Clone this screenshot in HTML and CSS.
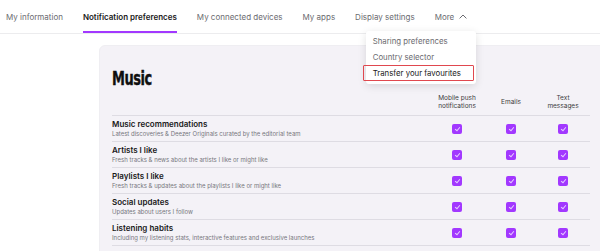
FILE: index.html
```html
<!DOCTYPE html>
<html lang="en">
<head>
  <meta charset="UTF-8" />
  <title>Notification preferences</title>
  <link rel="stylesheet" href="styles.css">
</head>
<body>
  <nav class="tabs">
    <a class="tab">My information</a>
    <a class="tab active">Notification preferences</a>
    <a class="tab">My connected devices</a>
    <a class="tab">My apps</a>
    <a class="tab">Display settings</a>
    <div class="tab more">
      More
      <svg class="chevron" width="8" height="5" viewBox="0 0 8 5"><path d="M0.6 4.4 L4 1 L7.4 4.4" fill="none" stroke="#6b6b70" stroke-width="1"/></svg>
      <ul class="menu">
        <li>Sharing preferences</li>
        <li>Country selector</li>
        <li class="selected">Transfer your favourites</li>
      </ul>
    </div>
  </nav>

  <main class="content">
    <section class="card">
      <h1 class="card-title">Music</h1>
      <div class="grid head">
        <div></div>
        <div class="col-label">Mobile push<br>notifications</div>
        <div class="col-label">Emails</div>
        <div class="col-label">Text<br>messages</div>
      </div>

      <div class="grid row">
        <div>
          <div class="row-title">Music recommendations</div>
          <div class="row-desc">Latest discoveries &amp; Deezer Originals curated by the editorial team</div>
        </div>
        <span class="check"></span><span class="check"></span><span class="check"></span>
      </div>
      <div class="grid row">
        <div>
          <div class="row-title">Artists I like</div>
          <div class="row-desc">Fresh tracks &amp; news about the artists I like or might like</div>
        </div>
        <span class="check"></span><span class="check"></span><span class="check"></span>
      </div>
      <div class="grid row">
        <div>
          <div class="row-title">Playlists I like</div>
          <div class="row-desc">Fresh tracks &amp; updates about the playlists I like or might like</div>
        </div>
        <span class="check"></span><span class="check"></span><span class="check"></span>
      </div>
      <div class="grid row">
        <div>
          <div class="row-title">Social updates</div>
          <div class="row-desc">Updates about users I follow</div>
        </div>
        <span class="check"></span><span class="check"></span><span class="check"></span>
      </div>
      <div class="grid row">
        <div>
          <div class="row-title">Listening habits</div>
          <div class="row-desc">Including my listening stats, interactive features and exclusive launches</div>
        </div>
        <span class="check"></span><span class="check"></span><span class="check"></span>
      </div>
    </section>
  </main>
</body>
</html>
```

FILE: styles.css
```css
body {
  margin: 0;
  font-family: Inter, "Noto Sans", sans-serif;
  background: #ffffff;
  color: #191919;
  overflow: hidden;
  height: 251px;
}
.tabs {
  display: flex;
  align-items: stretch;
  gap: 20px;
  height: 33px;
  padding-left: 6px;
  border-bottom: 1px solid #ececee;
}
.tab {
  display: flex;
  align-items: center;
  font-size: 8px;
  color: #6b6b70;
  border-bottom: 2px solid transparent;
  padding-top: 2px;
  white-space: nowrap;
}
.tab.active {
  color: #191919;
  font-weight: 600;
  border-bottom-color: #a238ff;
}
.more {
  position: relative;
  gap: 5px;
}
.menu {
  position: absolute;
  top: 31px;
  left: -69px;
  width: 110px;
  margin: 0;
  padding: 2px 0 3px;
  list-style: none;
  background: #ffffff;
  border-radius: 3px;
  box-shadow: 0 2px 8px rgba(0, 0, 0, 0.12);
  z-index: 2;
}
.menu li {
  font-size: 7.8px;
  line-height: 16px;
  padding-left: 7px;
  color: #6b6b70;
}
.menu li.selected {
  color: #191919;
  margin: 0 2px 0 -3px;
  padding-left: 9px;
  border: 1px solid #e0484f;
  border-radius: 1px;
  line-height: 14px;
}
.content {
  padding: 11px 0 0 99px;
}
.card {
  width: 520px;
  height: 260px;
  background: #f4f2f7;
  border: 1px solid #efeef2;
  border-radius: 6px 0 0 0;
  padding: 22px 0 0 12px;
}
.card-title {
  margin: 0;
  font-family: "DejaVu Sans", sans-serif;
  font-stretch: condensed;
  font-weight: 700;
  font-size: 20px;
  line-height: 20px;
  letter-spacing: -0.6px;
  color: #0f0f0f;
  -webkit-text-stroke: 0.4px #0f0f0f;
  transform: scaleX(0.72);
  transform-origin: left center;
}
.grid {
  display: grid;
  grid-template-columns: 1fr 58px 50px 54px;
  align-items: center;
  width: 478px;
  border-bottom: 1px solid #dedce3;
}
.head {
  margin-top: 6px;
  padding-bottom: 5px;
}
.col-label {
  text-align: center;
  font-size: 6.5px;
  line-height: 8px;
  color: #3c3c40;
}
.row {
  padding: 3px 0 3px;
}
.row-title {
  font-size: 8px;
  line-height: 11px;
  font-weight: 600;
}
.row-desc {
  font-size: 6px;
  line-height: 8px;
  color: #77777d;
}
.check {
  justify-self: center;
  width: 10px;
  height: 10px;
  border-radius: 2px;
  background: #a238ff;
  position: relative;
}
.check::after {
  content: "";
  position: absolute;
  left: 3.5px;
  top: 2px;
  width: 2px;
  height: 4px;
  border: solid rgba(255, 255, 255, 0.75);
  border-width: 0 1px 1px 0;
  transform: rotate(40deg);
}
```
